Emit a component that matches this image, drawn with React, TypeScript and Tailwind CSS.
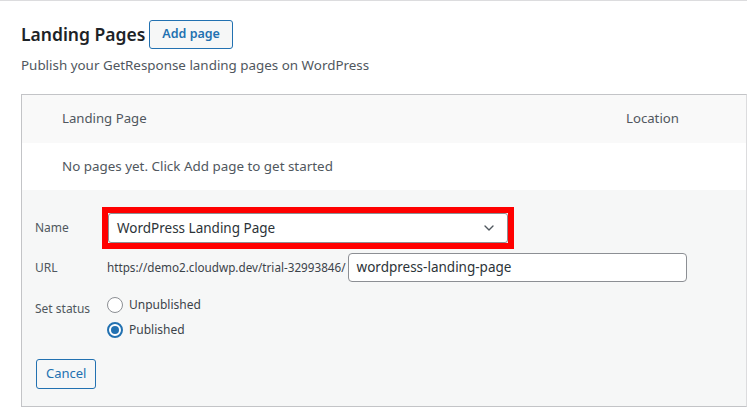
import { ChevronDown } from "lucide-react";

const font = { fontFamily: '"Noto Sans", "Open Sans", sans-serif' };

function Radio({ label, checked }: { label: string; checked?: boolean }) {
  return (
    <label className="flex items-center gap-[6px] h-[16px] text-[12px] text-[#3c434a]">
      <span
        className={`flex items-center justify-center w-[16px] h-[16px] rounded-full bg-white ${
          checked ? "border-2 border-[#2271b1]" : "border border-[#8c8f94]"
        }`}
      >
        {checked && <span className="w-[8px] h-[8px] rounded-full bg-[#2271b1]" />}
      </span>
      {label}
    </label>
  );
}

export default function App() {
  return (
    <div
      className="min-h-[416px] bg-white border-t border-[#dcdcde] pl-[21px] text-[#3c434a]"
      style={font}
    >
      {/* Heading */}
      <div className="flex items-center gap-[4px] pt-[19px]">
        <h1 className="text-[17.5px] font-semibold text-[#1d2327] leading-none">
          Landing Pages
        </h1>
        <button className="h-[29px] px-[12px] rounded-[3px] border border-[#2271b1] bg-[#f6f7f7] text-[12.5px] font-semibold text-[#2271b1]">
          Add page
        </button>
      </div>
      <p className="mt-[6px] text-[13.4px] text-[#50575e] leading-[20px]">
        Publish your GetResponse landing pages on WordPress
      </p>

      {/* Table */}
      <div className="mt-[19px] border border-[#c3c4c7] border-r-[#dcdcde]">
        <div className="flex items-center h-[48px] bg-[#f9f9f9] text-[13.2px] text-[#50575e]">
          <span className="pl-[40px] w-[604px]">Landing Page</span>
          <span>Location</span>
        </div>
        <div className="flex items-center h-[47px] bg-white pl-[40px] text-[13.4px] text-[#50575e]">
          No pages yet. Click Add page to get started
        </div>

        {/* Form */}
        <div className="bg-[#f6f7f7] pl-[13px] pt-[17px] pb-[17px]">
          <div className="flex items-center">
            <span className="w-[67px] text-[12px] text-[#50575e]">Name</span>
            <div className="border-[6px] border-[#ff0000]">
              <div className="flex items-center justify-between w-[400px] h-[30px] pl-[8px] pr-[10px] rounded-[3px] border border-[#8c8f94] bg-white text-[13.5px] text-[#2c3338]">
                WordPress Landing Page
                <ChevronDown className="w-[16px] h-[16px] text-[#50575e]" strokeWidth={2} />
              </div>
            </div>
          </div>

          <div className="flex items-center mt-[4px]">
            <span className="w-[72px] text-[12px] text-[#50575e]">URL</span>
            <span className="text-[11.7px] text-[#3c434a]">
              https://demo2.cloudwp.dev/trial-32993846/
            </span>
            <div className="flex items-center w-[339px] h-[29px] ml-[2px] px-[8px] rounded-[4px] border border-[#8c8f94] bg-white text-[13.5px] text-[#2c3338]">
              wordpress-landing-page
            </div>
          </div>

          <div className="flex mt-[15px]">
            <span className="w-[72px] pt-[3px] text-[12px] text-[#50575e]">Set status</span>
            <div className="flex flex-col gap-[9px]">
              <Radio label="Unpublished" />
              <Radio label="Published" checked />
            </div>
          </div>

          <button className="mt-[21px] ml-[1px] h-[30px] px-[9px] rounded-[3px] border border-[#2271b1] bg-[#f6f7f7] text-[13px] text-[#2271b1]">
            Cancel
          </button>
        </div>
      </div>
    </div>
  );
}
